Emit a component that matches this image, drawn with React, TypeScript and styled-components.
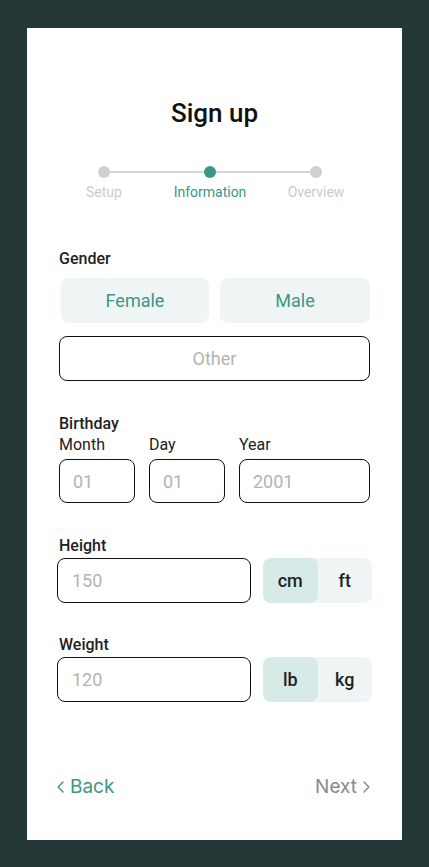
import styled, { createGlobalStyle } from 'styled-components'

const teal = '#3a9786'
const softBg = '#eef5f4'
const activeBg = '#d6ebe7'
const placeholder = '#b3b3b3'

const GlobalStyle = createGlobalStyle`
  * { box-sizing: border-box; }
  body {
    margin: 0;
    background: #243837;
    font-family: Roboto, "Noto Sans", sans-serif;
  }
`

const steps = ['Setup', 'Information', 'Overview']
const currentStep = 1

const ChevronLeft = () => (
  <svg width="7" height="12" viewBox="0 0 7 12" fill="none">
    <path d="M6 1L1.2 6L6 11" stroke="currentColor" strokeWidth="1.4" strokeLinecap="round" strokeLinejoin="round" />
  </svg>
)

const ChevronRight = () => (
  <svg width="7" height="12" viewBox="0 0 7 12" fill="none">
    <path d="M1 1L5.8 6L1 11" stroke="currentColor" strokeWidth="1.4" strokeLinecap="round" strokeLinejoin="round" />
  </svg>
)

const App = () => {
  return (
    <>
      <GlobalStyle />
      <Screen>
        <Card>
          <Title>Sign up</Title>

          <Stepper>
            {steps.map((step, i) => (
              <Step key={step} first={i === 0} last={i === steps.length - 1}>
                <Dot active={i === currentStep} />
                <StepLabel active={i === currentStep}>{step}</StepLabel>
              </Step>
            ))}
          </Stepper>

          <Section style={{ marginTop: 50 }}>
            <Label>Gender</Label>
            <GenderGrid>
              <SoftButton>Female</SoftButton>
              <SoftButton>Male</SoftButton>
            </GenderGrid>
            <OutlineButton>Other</OutlineButton>
          </Section>

          <Section style={{ marginTop: 34 }}>
            <Label>Birthday</Label>
            <DateRow>
              <DateField>
                <SubLabel>Month</SubLabel>
                <Input placeholder="01" />
              </DateField>
              <DateField>
                <SubLabel>Day</SubLabel>
                <Input placeholder="01" />
              </DateField>
              <DateField>
                <SubLabel>Year</SubLabel>
                <Input placeholder="2001" />
              </DateField>
            </DateRow>
          </Section>

          <Section style={{ marginTop: 34 }}>
            <Label>Height</Label>
            <MeasureRow>
              <Input placeholder="150" />
              <UnitToggle>
                <Unit active>cm</Unit>
                <Unit>ft</Unit>
              </UnitToggle>
            </MeasureRow>
          </Section>

          <Section style={{ marginTop: 33 }}>
            <Label>Weight</Label>
            <MeasureRow>
              <Input placeholder="120" />
              <UnitToggle>
                <Unit active>lb</Unit>
                <Unit>kg</Unit>
              </UnitToggle>
            </MeasureRow>
          </Section>

          <Footer>
            <NavButton primary>
              <ChevronLeft />
              Back
            </NavButton>
            <NavButton>
              Next
              <ChevronRight />
            </NavButton>
          </Footer>
        </Card>
      </Screen>
    </>
  )
}

export default App

const Screen = styled.div`
  width: 429px;
  height: 867px;
  padding: 28px 27px;
`

const Card = styled.main`
  width: 375px;
  height: 812px;
  background: #ffffff;
  padding: 0 32px 41px;
  display: flex;
  flex-direction: column;
`

const Title = styled.h1`
  margin: 70px 0 0;
  text-align: center;
  font-size: 26px;
  line-height: 30px;
  font-weight: 500;
  color: #111;
`

const Stepper = styled.div`
  margin: 38px 0 0 -8px;
  display: grid;
  grid-template-columns: repeat(3, 106px);
`

const Step = styled.div<{ first?: boolean; last?: boolean }>`
  position: relative;
  display: flex;
  flex-direction: column;
  align-items: center;
  gap: 6px;

  &::before,
  &::after {
    content: '';
    position: absolute;
    top: 5px;
    height: 2px;
    background: #d4d4d4;
  }
  &::before {
    left: 0;
    right: 50%;
    display: ${({ first }) => (first ? 'none' : 'block')};
  }
  &::after {
    left: 50%;
    right: 0;
    display: ${({ last }) => (last ? 'none' : 'block')};
  }
`

const Dot = styled.span<{ active?: boolean }>`
  position: relative;
  z-index: 1;
  width: 12px;
  height: 12px;
  border-radius: 50%;
  background: ${({ active }) => (active ? teal : '#d0d0d0')};
`

const StepLabel = styled.span<{ active?: boolean }>`
  font-size: 14px;
  line-height: 16px;
  color: ${({ active }) => (active ? teal : '#cbcbcb')};
`

const Section = styled.section`
  display: flex;
  flex-direction: column;
`

const Label = styled.div`
  font-size: 16px;
  line-height: 18px;
  font-weight: 500;
  color: #222;
`

const GenderGrid = styled.div`
  margin-top: 10px;
  padding-left: 2px;
  display: grid;
  grid-template-columns: 148px 1fr;
  gap: 11px;
`

const SoftButton = styled.button`
  height: 45px;
  border: none;
  border-radius: 8px;
  background: ${softBg};
  color: ${teal};
  font-family: inherit;
  font-size: 18px;
`

const OutlineButton = styled.button`
  margin-top: 13px;
  height: 45px;
  border: 1px solid #111;
  border-radius: 8px;
  background: #fff;
  color: ${placeholder};
  font-family: inherit;
  font-size: 18px;
`

const DateRow = styled.div`
  margin-top: 3px;
  display: grid;
  grid-template-columns: 76px 76px 1fr;
  gap: 14px;
`

const DateField = styled.div`
  display: flex;
  flex-direction: column;
  gap: 5px;
`

const SubLabel = styled.div`
  font-size: 16px;
  line-height: 18px;
  color: #222;
`

const Input = styled.input`
  width: 100%;
  height: 44px;
  min-width: 0;
  border: 1px solid #111;
  border-radius: 8px;
  padding: 0 13px;
  font-family: inherit;
  font-size: 18px;
  color: #222;
  background: #fff;
  outline: none;

  &::placeholder {
    color: ${placeholder};
  }
`

const MeasureRow = styled.div`
  margin: 3px -2px 0;
  display: grid;
  grid-template-columns: 194px 1fr;
  gap: 12px;

  ${Input} {
    height: 45px;
    padding: 0 14px;
  }
`

const UnitToggle = styled.div`
  display: grid;
  grid-template-columns: 1fr 1fr;
  height: 45px;
  border-radius: 8px;
  background: ${softBg};
  overflow: hidden;
`

const Unit = styled.button<{ active?: boolean }>`
  border: none;
  border-radius: 8px;
  background: ${({ active }) => (active ? activeBg : 'transparent')};
  color: #222;
  font-family: inherit;
  font-size: 18px;
  font-weight: 500;
`

const Footer = styled.footer`
  margin-top: auto;
  margin-left: -2px;
  display: flex;
  justify-content: space-between;
  align-items: center;
`

const NavButton = styled.button<{ primary?: boolean }>`
  display: inline-flex;
  align-items: center;
  gap: 6px;
  padding: 0;
  border: none;
  background: none;
  color: ${({ primary }) => (primary ? teal : '#888888')};
  font-family: Inter, Roboto, sans-serif;
  font-size: 19px;
  line-height: 24px;
`
